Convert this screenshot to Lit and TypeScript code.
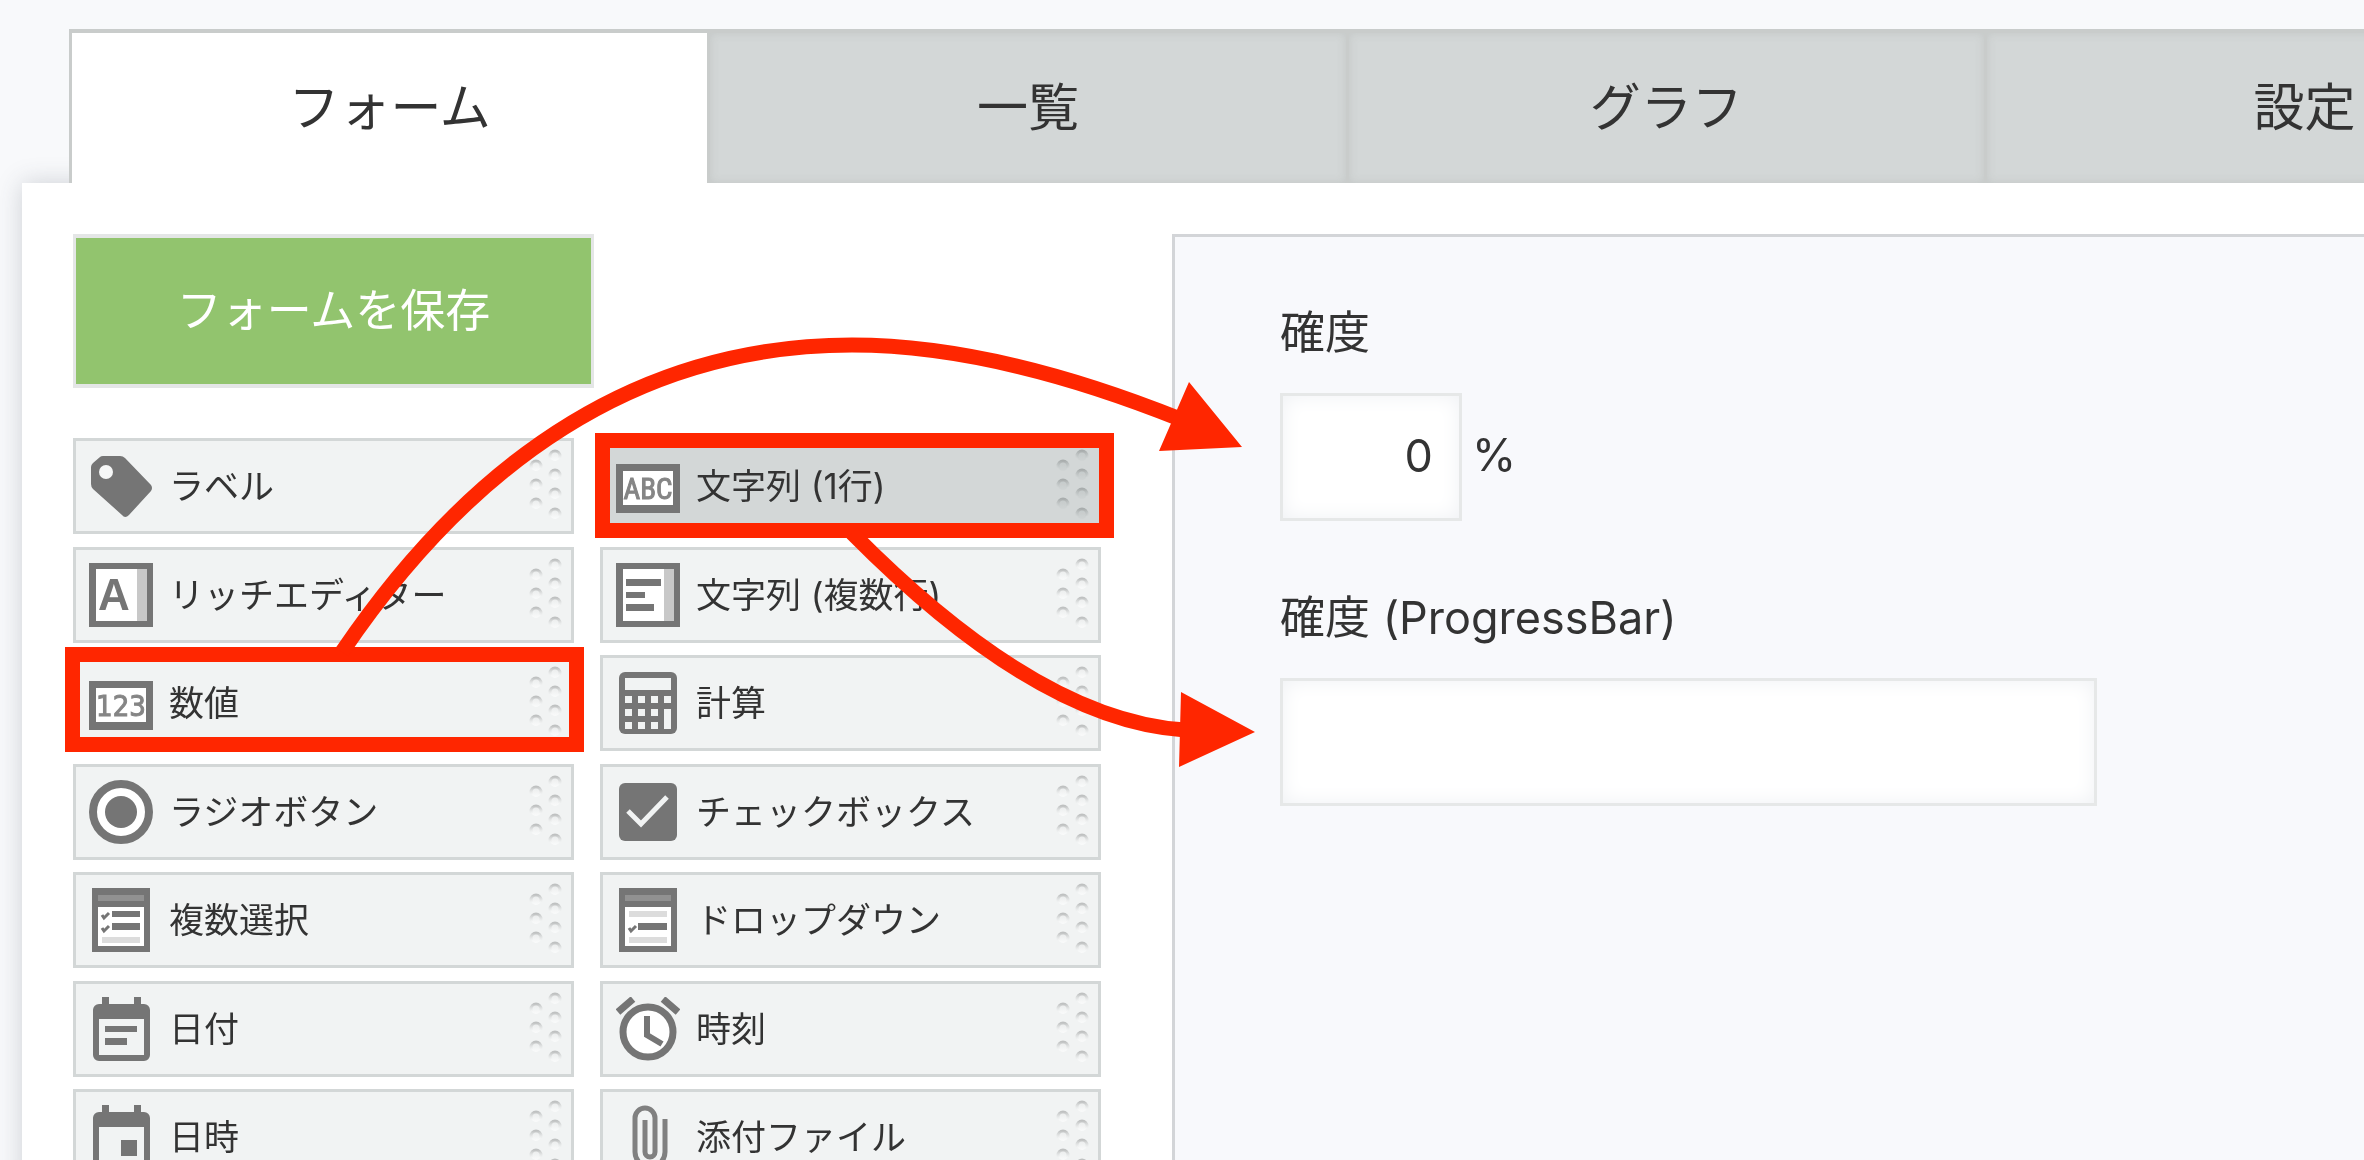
import { LitElement, html, css, svg } from "lit";
import { customElement, property, state } from "lit/decorators.js";
import { classMap } from "lit/directives/class-map.js";

const check = (y: number) => svg`<path d="M13 ${y + 2}l2 3l5 -5" fill="none" stroke="#757575" stroke-width="3"/>`;

const calendar = svg`
  <path d="M13 0h7v7h25v-7h7v7h3a6 6 0 0 1 6 6v45a6 6 0 0 1 -6 6h-45a6 6 0 0 1 -6 -6v-45a6 6 0 0 1 6 -6h3z" fill="#757575"/>
  <rect x="10" y="22" width="45" height="36" fill="#f1f3f3"/>`;

const listFrame = svg`
  <rect x="3" width="58" height="64" fill="#757575"/>
  <rect x="9" y="7" width="46" height="6" fill="#919191"/>
  <rect x="9" y="19" width="46" height="39" fill="#fff"/>`;

const ICONS: Record<string, unknown> = {
  label: svg`
    <path d="M14 2h17q3 0 5 2l26 27q2 3 0 6l-22 24q-4 4 -7 0l-29 -26q-2 -2 -2 -5v-17q0 -2 2 -4l7 -6q1 -1 3 -1z" fill="#757575"/>
    <circle cx="17" cy="18" r="7" fill="#f6f7f7"/>`,
  rich: svg`
    <rect width="64" height="64" fill="#757575"/>
    <rect x="7" y="6" width="41" height="52" fill="#fff"/>
    <rect x="48" y="6" width="10" height="52" fill="#c8c8c8"/>
    <text x="25" y="47" text-anchor="middle" class="g-bold">A</text>`,
  number: svg`
    <rect y="10" width="64" height="49" fill="#757575"/>
    <rect x="7" y="17" width="50" height="34" fill="#fff"/>
    <text x="32" y="45" text-anchor="middle" class="g-num">123</text>`,
  text: svg`
    <rect y="10" width="64" height="49" fill="#757575"/>
    <rect x="7" y="17" width="50" height="34" fill="#fff"/>
    <text x="32" y="45" text-anchor="middle" class="g-abc">ABC</text>`,
  multi: svg`
    <rect width="64" height="64" fill="#757575"/>
    <rect x="7" y="6" width="41" height="52" fill="#fff"/>
    <rect x="48" y="6" width="10" height="52" fill="#c8c8c8"/>
    <path d="M10 16h35v7h-35zM10 29h19v6h-19zM10 41h28v7h-28z" fill="#757575"/>`,
  calc: svg`
    <rect x="3" y="1" width="58" height="62" rx="6" fill="#757575"/>
    <rect x="9" y="7" width="46" height="12" fill="#f1f3f3"/>
    <path d="M9 25h7v7h-7zM22 25h7v7h-7zM35 25h7v7h-7zM48 25h7v7h-7zM9 38h7v7h-7zM22 38h7v7h-7zM35 38h7v7h-7zM48 38h7v20h-7zM9 51h7v7h-7zM22 51h7v7h-7zM35 51h7v7h-7z" fill="#f1f3f3"/>`,
  radio: svg`
    <circle cx="32" cy="32" r="28" fill="#fff" stroke="#757575" stroke-width="8"/>
    <circle cx="32" cy="32" r="16" fill="#757575"/>`,
  checkbox: svg`
    <rect x="3" y="3" width="58" height="58" rx="6" fill="#757575"/>
    <path d="M12 31l13 13l26 -27" fill="none" stroke="#f1f3f3" stroke-width="5"/>`,
  select: svg`${listFrame}
    <path d="M23 23h28v6h-28zM23 35h28v7h-28z" fill="#757575"/>
    <rect x="13" y="49" width="38" height="6" fill="#dcdcdc"/>
    ${check(25)}${check(38)}`,
  dropdown: svg`${listFrame}
    <rect x="13" y="23" width="38" height="6" fill="#dcdcdc"/>
    <rect x="22" y="35" width="29" height="7" fill="#757575"/>
    <rect x="13" y="49" width="38" height="6" fill="#dcdcdc"/>
    ${check(38)}`,
  date: svg`${calendar}<path d="M16 29h32v6h-32zM16 41h22v7h-22z" fill="#757575"/>`,
  datetime: svg`${calendar}<rect x="32" y="35" width="16" height="16" fill="#757575"/>`,
  time: svg`
    <circle cx="32" cy="35" r="25" fill="#fff" stroke="#757575" stroke-width="7"/>
    <path d="M31 19v19l15 9" fill="none" stroke="#757575" stroke-width="6"/>
    <path d="M2 15l15 -13M47 2l15 13" stroke="#757575" stroke-width="7"/>`,
  file: svg`<path d="M49 14v33a15 15 0 0 1 -30 0v-34a10 10 0 0 1 20 0v34a5 5 0 0 1 -10 0v-32" fill="none" stroke="#808080" stroke-width="5"/>`,
};

@customElement("field-icon")
class FieldIcon extends LitElement {
  @property() name = "label";

  static styles = css`
    :host { display: block; width: 64px; height: 64px; flex: none; }
    svg { display: block; }
    .g-bold { font: 900 44px "Liberation Sans", sans-serif; fill: #757575; }
    .g-num { font: 29px "DejaVu Sans Condensed", "Noto Sans", sans-serif; fill: #858585; stroke: #858585; }
    .g-abc { font: 29px "Liberation Sans Narrow", "Roboto Condensed", sans-serif; fill: #858585; stroke: #858585; }
  `;

  render() {
    return html`<svg width="64" height="64" viewBox="0 0 64 64" aria-hidden="true">${ICONS[this.name]}</svg>`;
  }
}

const GRIP = [[27, 8], [27, 27], [27, 46], [27, 66], [8, 18], [8, 37], [8, 56]];

@customElement("palette-item")
class PaletteItem extends LitElement {
  @property() icon = "label";
  @property() label = "";
  @property({ type: Boolean }) active = false;

  static styles = css`
    :host { display: block; height: 96px; }
    .item {
      display: flex; align-items: center; gap: 16px;
      box-sizing: border-box; width: 100%; height: 96px; margin: 0;
      padding: 0 7px 0 13px; border: 3px solid #d3d7d7; border-radius: 0;
      background: #f1f3f3; color: #333; cursor: move; text-align: left;
      font: 35px/40px Inter, "Noto Sans CJK JP", sans-serif;
    }
    .active { background: #d3d7d7; }
    .text { flex: 1; white-space: nowrap; }
    .grip { flex: none; display: block; }
    .active .grip { mix-blend-mode: multiply; opacity: 0.8; }
  `;

  render() {
    return html`
      <button type="button" class=${classMap({ item: true, active: this.active })}>
        <field-icon name=${this.icon}></field-icon>
        <span class="text">${this.label}</span>
        <svg class="grip" width="36" height="76" viewBox="0 0 36 76" aria-hidden="true">
          <defs>
            <linearGradient id="ring" x1="0" y1="0" x2="0" y2="1">
              <stop offset="0" stop-color="#bfc1c1"/>
              <stop offset="0.75" stop-color="#dcdede" stop-opacity="0"/>
            </linearGradient>
            <linearGradient id="core" x1="0" y1="0" x2="0" y2="1">
              <stop offset="0" stop-color="#e9ebeb"/>
              <stop offset="1" stop-color="#fafbfb"/>
            </linearGradient>
          </defs>
          ${GRIP.map(([x, y]) => svg`<circle cx=${x} cy=${y} r="5" fill="url(#core)" stroke="url(#ring)" stroke-width="3"/>`)}
        </svg>
      </button>`;
  }
}

const FIELDS = [
  ["label", "ラベル"], ["text", "文字列 (1行)"],
  ["rich", "リッチエディター"], ["multi", "文字列 (複数行)"],
  ["number", "数値"], ["calc", "計算"],
  ["radio", "ラジオボタン"], ["checkbox", "チェックボックス"],
  ["select", "複数選択"], ["dropdown", "ドロップダウン"],
  ["date", "日付"], ["time", "時刻"],
  ["datetime", "日時"], ["file", "添付ファイル"],
];

const TABS = ["フォーム", "一覧", "グラフ", "設定"];

@customElement("app-root")
class AppRoot extends LitElement {
  @state() private tab = 0;

  static styles = css`
    :host {
      display: flex; flex-direction: column; position: relative;
      box-sizing: border-box; height: 100vh; overflow: hidden; padding-top: 29px;
      background: #f8f9fb; color: #333;
      font-family: Inter, "Noto Sans CJK JP", sans-serif;
    }
    .tabs { display: flex; flex: none; padding-left: 69px; position: relative; z-index: 1; }
    .tab {
      flex: 0 0 27vw; box-sizing: border-box; height: 154px; margin: 0; padding: 0;
      border: solid #c9cccb; border-width: 4px 0 0 3px; border-radius: 0;
      background: #d3d7d7; color: #333; cursor: pointer;
      box-shadow: inset 0 0 10px rgba(120, 120, 110, 0.16);
      font: 51px/72px Inter, "Noto Sans CJK JP", sans-serif;
    }
    .selected { background: #fff; box-shadow: none; }
    .panel {
      flex: 1; display: flex; align-items: stretch; gap: 71px;
      margin-left: 22px; padding: 51px 0 0 51px;
      background: #fff; box-shadow: 0 0 24px rgba(60, 70, 80, 0.22);
    }
    .side { flex: none; width: 1028px; }
    .save {
      display: block; box-sizing: border-box; width: 521px; height: 154px; margin: 0 0 50px; padding: 0;
      border: 4px solid #e4e6e6; border-width: 4px 3px; border-radius: 0;
      background: #92c46e; color: #fff; cursor: pointer;
      font: 45px/64px Inter, "Noto Sans CJK JP", sans-serif;
    }
    .palette {
      display: grid; grid-template-columns: 1fr 1fr; grid-auto-rows: 97px 96px;
      gap: 12px 26px;
    }
    .preview {
      flex: 1; min-width: 0; padding: 64px 0 0 105px;
      border: solid #d3d5d8; border-width: 3px 0 0 3px; background: #f8f9fc;
    }
    .field { margin-bottom: 65px; font-size: 45px; line-height: 64px; }
    .caption { display: block; margin-bottom: 28px; }
    .row { display: flex; align-items: center; gap: 10px; }
    .unit { padding-bottom: 4px; }
    .box {
      box-sizing: border-box; height: 128px; padding: 0 26px 4px; border: 3px solid #e6e8e8; border-radius: 0;
      background: #fff; color: #333; outline: none; box-shadow: inset 0 0 20px #eff1f4;
      font: 45px/64px Inter, "Noto Sans CJK JP", sans-serif;
    }
    .short { width: 182px; text-align: right; }
    .long { width: 817px; max-width: 100%; }
    .marks { position: absolute; left: 0; top: 0; z-index: 2; pointer-events: none; }
  `;

  render() {
    return html`
      <nav class="tabs" role="tablist">
        ${TABS.map((name, i) => html`
          <button type="button" role="tab" aria-selected=${i === this.tab}
            class=${classMap({ tab: true, selected: i === this.tab })}
            @click=${() => (this.tab = i)}>${name}</button>`)}
      </nav>
      <main class="panel">
        <section class="side">
          <button type="button" class="save">フォームを保存</button>
          <div class="palette">
            ${FIELDS.map(([icon, label]) => html`
              <palette-item icon=${icon} label=${label} ?active=${icon === "text"}></palette-item>`)}
          </div>
        </section>
        <form class="preview">
          <div class="field">
            <label class="caption" for="rate">確度</label>
            <div class="row"><input class="box short" id="rate" type="text" inputmode="numeric" .value=${"0"}><span class="unit">%</span></div>
          </div>
          <div class="field">
            <label class="caption" for="bar">確度 (ProgressBar)</label>
            <div class="row"><input class="box long" id="bar" type="text"></div>
          </div>
        </form>
      </main>
      <svg class="marks" width="2364" height="1160" viewBox="0 0 2364 1160" aria-hidden="true">
        <g fill="none" stroke="#ff2600" stroke-width="15">
          <rect x="72.5" y="654.5" width="504" height="90"/>
          <rect x="602.5" y="440.5" width="504" height="90"/>
          <path d="M342 652Q550 345 852 345Q995 345 1180 419"/>
          <path d="M852 533Q1038 721 1185 730"/>
        </g>
        <path d="M1189 382L1242 447L1159 451zM1181 692L1255 732L1179 767z" fill="#ff2600"/>
      </svg>`;
  }
}
